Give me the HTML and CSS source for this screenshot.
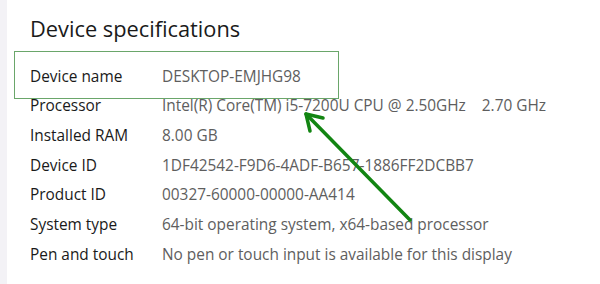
FILE: index.html
```html
<!DOCTYPE html>
<html>
<head>
<meta charset="utf-8">
<link rel="stylesheet" href="styles.css">
</head>
<body>
<div class="page">
  <div class="strip"></div>
  <main class="content">
    <h1 class="title">Device specifications</h1>
    <dl class="specs">
      <dt>Device name</dt><dd>DESKTOP-EMJHG98</dd>
      <dt>Processor</dt><dd>Intel(R) Core(TM) i5-7200U CPU @ 2.50GHz&nbsp;&nbsp;&nbsp;&nbsp;2.70 GHz</dd>
      <dt>Installed RAM</dt><dd>8.00 GB</dd>
      <dt>Device ID</dt><dd>1DF42542-F9D6-4ADF-B657-1886FF2DCBB7</dd>
      <dt>Product ID</dt><dd>00327-60000-00000-AA414</dd>
      <dt>System type</dt><dd>64-bit operating system, x64-based processor</dd>
      <dt>Pen and touch</dt><dd>No pen or touch input is available for this display</dd>
    </dl>
  </main>
  <div class="highlight"></div>
  <svg class="arrow" width="600" height="284" viewBox="0 0 600 284">
    <path d="M410 220 L306 114" stroke="#128512" stroke-width="3.5" fill="none" stroke-linecap="round"/>
    <path d="M323 118 L306 114 L310 131" stroke="#128512" stroke-width="3.5" fill="none" stroke-linecap="round" stroke-linejoin="round"/>
  </svg>
</div>
</body>
</html>
```
FILE: styles.css
```css
html, body {
  margin: 0;
  padding: 0;
  background: #ffffff;
}
.page {
  position: relative;
  width: 600px;
  height: 284px;
  display: flex;
  overflow: hidden;
  font-family: "Open Sans", "Noto Sans", sans-serif;
}
.strip {
  width: 7px;
  flex: none;
  background: #f3f2f6;
}
.content {
  flex: 1;
  padding: 12px 0 0 23px;
}
.title {
  margin: 0;
  font-size: 21.8px;
  font-weight: 400;
  line-height: 34px;
  color: #1a1a1a;
}
.specs {
  margin: 16px 0 0 0;
  display: grid;
  grid-template-columns: 132px auto;
  grid-auto-rows: 29.67px;
  align-items: center;
  font-size: 15.4px;
}
.specs dt {
  color: #1a1a1a;
  line-height: 20px;
}
.specs dd {
  margin: 0;
  color: #5e5e5e;
  line-height: 20px;
  white-space: nowrap;
}
.highlight {
  position: absolute;
  left: 14px;
  top: 51px;
  width: 323px;
  height: 46px;
  border: 1px solid #6aa66a;
}
.arrow {
  position: absolute;
  left: 0;
  top: 0;
}
```
